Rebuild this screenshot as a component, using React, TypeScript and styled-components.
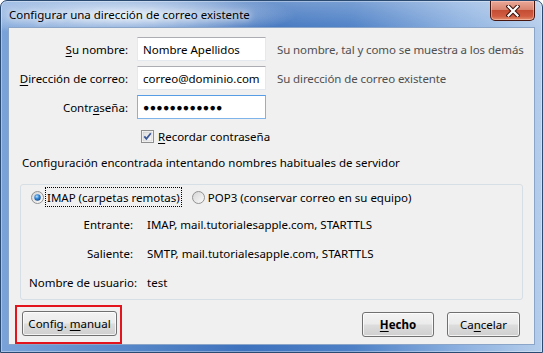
import React from "react";
import styled, { createGlobalStyle } from "styled-components";

const FONT = `"Noto Sans", "Segoe UI", sans-serif`;
const SIZE = "11.5px";

const GlobalStyle = createGlobalStyle`
  html, body { margin: 0; padding: 0; }
  body {
    width: 543px; height: 353px; overflow: hidden; background: #fff;
    font-family: ${FONT}; font-size: ${SIZE}; color: #000;
  }
  * { box-sizing: border-box; }
`;

const Window = styled.div`
  width: 543px;
  height: 353px;
  display: flex;
  flex-direction: column;
  border: 1px solid #2a4a72;
  border-radius: 7px 7px 0 0;
  padding: 0 7px 7px;
  background:
    radial-gradient(ellipse 170px 24px at 125px 14px, rgba(236, 243, 252, 0.95), rgba(236, 243, 252, 0) 100%),
    linear-gradient(to bottom, rgba(255, 255, 255, 0.25), rgba(255, 255, 255, 0) 30px),
    linear-gradient(to right, #7aa3d9 0%, #5a8aca 20%, #3e72bd 45%, #4d80c6 65%, #8db1e0 85%, #b5cdeb 100%);
  box-shadow: inset 0 0 0 1px rgba(255, 255, 255, 0.35);
`;

const TitleBar = styled.div`
  height: 29px;
  display: flex;
  align-items: flex-start;
  justify-content: space-between;
`;

const Title = styled.div`
  padding: 6px 0 0 1px;
  font-size: ${SIZE};
  color: #000;
  text-shadow: 0 0 6px rgba(255, 255, 255, 0.9), 0 0 10px rgba(255, 255, 255, 0.8);
`;

const CloseButton = styled.div`
  width: 45px;
  height: 20px;
  display: flex;
  align-items: center;
  justify-content: center;
  border: 1px solid #47160f;
  border-top: none;
  border-radius: 0 0 5px 5px;
  background: linear-gradient(to bottom, #eaa998 0%, #d98470 45%, #c44e34 50%, #d05c40 80%, #e28d6d 100%);
  box-shadow: inset 0 0 0 1px rgba(255, 210, 200, 0.5);
`;

const Client = styled.div`
  flex: 1;
  display: flex;
  flex-direction: column;
  background: #f0f0f0;
  border: 1px solid #8aa5c8;
  padding: 9px 11px 0 0;
`;

const FormGrid = styled.div`
  display: grid;
  grid-template-columns: 119px 129px auto;
  grid-auto-rows: 24px;
  column-gap: 9px;
  row-gap: 5px;
  align-items: center;
`;

const FieldLabel = styled.label`
  text-align: right;
  color: #000;
  white-space: nowrap;
`;

const TextBox = styled.input<{ $focused?: boolean }>`
  width: 129px;
  height: 24px;
  padding: 0 0 0 5px;
  margin: 0;
  background: #fff;
  border: 1px solid ${(p) => (p.$focused ? "#7eb4ea" : "#e3e9ef")};
  border-top-color: ${(p) => (p.$focused ? "#569de5" : "#abadb3")};
  font-family: ${FONT};
  font-size: ${SIZE};
  color: #000;
  outline: none;
`;

const PasswordBox = styled(TextBox)`
  font-size: 10.5px;
  letter-spacing: 0.3px;
`;

const Hint = styled.span`
  margin-left: 2px;
  color: #4f4f4f;
  white-space: nowrap;
  letter-spacing: -0.1px;
`;

const CheckRow = styled.label`
  grid-column: 2 / span 2;
  height: 18px;
  display: flex;
  align-items: center;
  gap: 4px;
  padding-left: 4px;
  white-space: nowrap;
`;

const Key = styled.span`
  text-decoration: underline;
  text-underline-offset: 2px;
`;

const Description = styled.div`
  margin: 7px 0 0 13px;
  line-height: 16px;
  white-space: nowrap;
`;

const GroupBox = styled.div`
  margin: 13px 0 0 11px;
  height: 116px;
  border: 1px solid #d5dfe5;
  border-radius: 3px;
  padding: 2px 0 0 8px;
`;

const RadioRow = styled.div`
  height: 20px;
  display: flex;
  align-items: center;
  gap: 10px;
  padding-left: 2px;
`;

const RadioOption = styled.label`
  display: flex;
  align-items: center;
  gap: 1px;
  white-space: nowrap;
`;

const RadioText = styled.span<{ $focused?: boolean }>`
  height: 20px;
  display: flex;
  align-items: center;
  padding: 0 1px;
  border: 1px dotted ${(p) => (p.$focused ? "#000" : "transparent")};
`;

const DetailGrid = styled.div`
  margin-top: 9px;
  display: grid;
  grid-template-columns: 104px auto;
  grid-auto-rows: 16px;
  column-gap: 14px;
  row-gap: 13px;
  align-items: center;
`;

const DetailLabel = styled.span`
  text-align: right;
  white-space: nowrap;
`;

const DetailValue = styled.span`
  white-space: nowrap;
`;

const ButtonRow = styled.div`
  margin-top: 5px;
  display: flex;
  align-items: center;
  padding: 0 3px 0 6px;
  gap: 13px;
`;

const Highlight = styled.div`
  border: 2px solid #e3141b;
  padding: 4px 3px 6px 5px;
`;

const Spacer = styled.div`
  flex: 1;
`;

const Button = styled.button<{ $primary?: boolean; $w: number }>`
  width: ${(p) => p.$w}px;
  height: 25px;
  padding: 0;
  font-family: ${FONT};
  font-size: ${SIZE};
  font-weight: ${(p) => (p.$primary ? 700 : 400)};
  color: #000;
  border: 1px solid #707070;
  border-radius: 3px;
  background: linear-gradient(to bottom, #f3f3f3 0%, #ebebeb 48%, #dddddd 52%, #cfcfcf 100%);
  box-shadow: inset 0 0 0 1px rgba(255, 255, 255, 0.75);
`;

const CloseIcon = () => (
  <svg width="14" height="12" viewBox="0 0 14 12">
    <path d="M2.5 1.5 L11.5 10.5 M11.5 1.5 L2.5 10.5" stroke="#3b120b" strokeWidth="4.2" strokeLinecap="square" />
    <path d="M2.5 1.5 L11.5 10.5 M11.5 1.5 L2.5 10.5" stroke="#ffffff" strokeWidth="2.2" strokeLinecap="square" />
  </svg>
);

const CheckBoxIcon = () => (
  <svg width="13" height="13" viewBox="0 0 13 13">
    <defs>
      <linearGradient id="cbg" x1="0" y1="0" x2="1" y2="1">
        <stop offset="0" stopColor="#dedede" />
        <stop offset="1" stopColor="#fafafa" />
      </linearGradient>
    </defs>
    <rect x="0.5" y="0.5" width="12" height="12" fill="#fff" stroke="#8e8f8f" />
    <rect x="2" y="2" width="9" height="9" fill="url(#cbg)" stroke="#c4c4c4" strokeWidth="0.6" />
    <path d="M3.3 6.3 L5.4 8.8 L9.8 3.2" fill="none" stroke="#3c5a9a" strokeWidth="1.8" />
  </svg>
);

const RadioIcon = ({ checked }: { checked?: boolean }) => {
  const id = checked ? "r1" : "r0";
  return (
    <svg width="13" height="13" viewBox="0 0 13 13">
      <defs>
        <linearGradient id={`${id}b`} x1="0" y1="0" x2="1" y2="1">
          <stop offset="0" stopColor="#d4d4d4" />
          <stop offset="1" stopColor="#fcfcfc" />
        </linearGradient>
        <radialGradient id={`${id}d`} cx="0.4" cy="0.35" r="0.75">
          <stop offset="0" stopColor="#b9e4ff" />
          <stop offset="0.45" stopColor="#2f86d8" />
          <stop offset="1" stopColor="#0f3f7f" />
        </radialGradient>
      </defs>
      <circle cx="6.5" cy="6.5" r="6" fill={`url(#${id}b)`} stroke="#929292" />
      {checked && <circle cx="6.5" cy="6.5" r="3.2" fill={`url(#${id}d)`} />}
    </svg>
  );
};

export default function App() {
  return (
    <>
      <GlobalStyle />
      <Window>
        <TitleBar>
          <Title>Configurar una dirección de correo existente</Title>
          <CloseButton>
            <CloseIcon />
          </CloseButton>
        </TitleBar>
        <Client>
          <FormGrid>
            <FieldLabel>
              <Key>S</Key>u nombre:
            </FieldLabel>
            <TextBox readOnly value="Nombre Apellidos" />
            <Hint>Su nombre, tal y como se muestra a los demás</Hint>

            <FieldLabel>
              <Key>D</Key>irección de correo:
            </FieldLabel>
            <TextBox readOnly value="correo@dominio.com" />
            <Hint>Su dirección de correo existente</Hint>

            <FieldLabel>
              Contr<Key>a</Key>seña:
            </FieldLabel>
            <PasswordBox readOnly $focused value="●●●●●●●●●●●●" />
            <span />

            <CheckRow>
              <CheckBoxIcon />
              <span>
                <Key>R</Key>ecordar contraseña
              </span>
            </CheckRow>
          </FormGrid>

          <Description>Configuración encontrada intentando nombres habituales de servidor</Description>

          <GroupBox>
            <RadioRow>
              <RadioOption>
                <RadioIcon checked />
                <RadioText $focused>IMAP (carpetas remotas)</RadioText>
              </RadioOption>
              <RadioOption>
                <RadioIcon />
                <RadioText>POP3 (conservar correo en su equipo)</RadioText>
              </RadioOption>
            </RadioRow>
            <DetailGrid>
              <DetailLabel>Entrante:</DetailLabel>
              <DetailValue>IMAP, mail.tutorialesapple.com, STARTTLS</DetailValue>
              <DetailLabel>Saliente:</DetailLabel>
              <DetailValue>SMTP, mail.tutorialesapple.com, STARTTLS</DetailValue>
              <DetailLabel>Nombre de usuario:</DetailLabel>
              <DetailValue>test</DetailValue>
            </DetailGrid>
          </GroupBox>

          <ButtonRow>
            <Highlight>
              <Button $w={95}>
                Config. <Key>m</Key>anual
              </Button>
            </Highlight>
            <Spacer />
            <Button $primary $w={72}>
              <Key>H</Key>echo
            </Button>
            <Button $w={73}>
              Ca<Key>n</Key>celar
            </Button>
          </ButtonRow>
        </Client>
      </Window>
    </>
  );
}
